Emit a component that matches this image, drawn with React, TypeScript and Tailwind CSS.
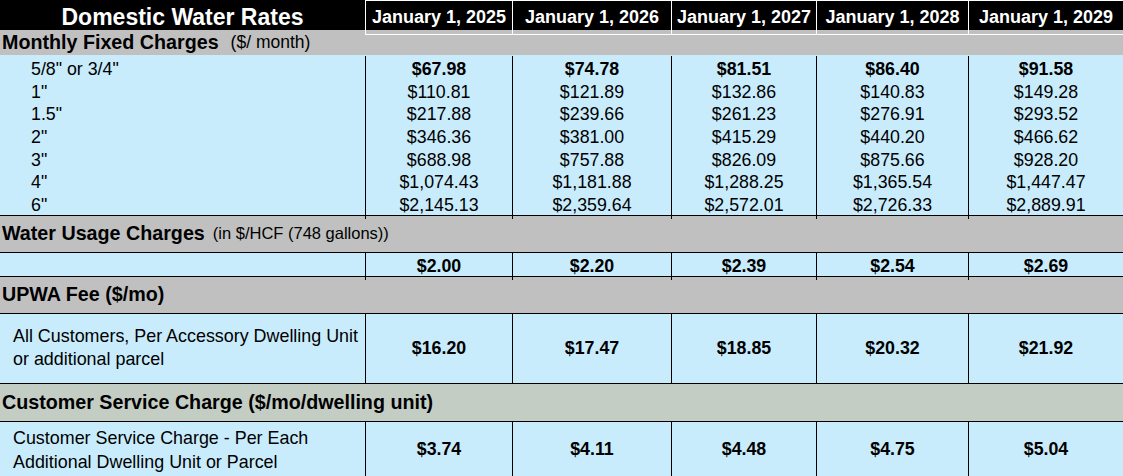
import React from 'react';

const cols = 'grid grid-cols-[366px_147px_159px_145px_152px_154px]';
const years = ['January 1, 2025', 'January 1, 2026', 'January 1, 2027', 'January 1, 2028', 'January 1, 2029'];

const fixedCharges: { size: string; values: string[]; bold?: boolean }[] = [
  { size: '5/8" or 3/4"', values: ['$67.98', '$74.78', '$81.51', '$86.40', '$91.58'], bold: true },
  { size: '1"', values: ['$110.81', '$121.89', '$132.86', '$140.83', '$149.28'] },
  { size: '1.5"', values: ['$217.88', '$239.66', '$261.23', '$276.91', '$293.52'] },
  { size: '2"', values: ['$346.36', '$381.00', '$415.29', '$440.20', '$466.62'] },
  { size: '3"', values: ['$688.98', '$757.88', '$826.09', '$875.66', '$928.20'] },
  { size: '4"', values: ['$1,074.43', '$1,181.88', '$1,288.25', '$1,365.54', '$1,447.47'] },
  { size: '6"', values: ['$2,145.13', '$2,359.64', '$2,572.01', '$2,726.33', '$2,889.91'] },
];

const usage = ['$2.00', '$2.20', '$2.39', '$2.54', '$2.69'];
const upwa = ['$16.20', '$17.47', '$18.85', '$20.32', '$21.92'];
const service = ['$3.74', '$4.11', '$4.48', '$4.75', '$5.04'];

const ValueCells: React.FC<{ values: string[]; bold?: boolean }> = ({ values, bold }) => (
  <>
    {values.map((v, i) => (
      <div
        key={i}
        className={`flex items-center justify-center ${i < values.length - 1 ? 'border-r border-black' : ''} ${bold ? 'font-bold' : ''}`}
      >
        {v}
      </div>
    ))}
  </>
);

const App: React.FC = () => {
  return (
    <div className="h-[476px] w-[1123px] overflow-hidden bg-white font-['Liberation_Sans',Arial,sans-serif] text-[17.8px] text-black">
      {/* header */}
      <div className={`${cols} h-[30px] bg-black text-white font-bold`}>
        <div className="flex items-center justify-center border-r border-white text-[23px]">Domestic Water Rates</div>
        {years.map((y, i) => (
          <div
            key={y}
            className={`flex items-center justify-center border-y border-white text-[18px] ${i < years.length - 1 ? 'border-r' : ''}`}
          >
            {y}
          </div>
        ))}
      </div>

      {/* monthly fixed */}
      <div className="flex h-[25px] items-center bg-[#c0c0c0] pl-[2px]">
        <span className="text-[19.7px] font-bold">Monthly Fixed Charges</span>
        <span className="ml-[12px] text-[17.5px]">($/ month)</span>
      </div>
      <div className="border-b border-black bg-[#c9ecfc] pt-[1px]">
        {fixedCharges.map((row) => (
          <div key={row.size} className={`${cols} h-[22.7px]`}>
            <div className="flex items-center border-r border-black pl-[31px]">{row.size}</div>
            <ValueCells values={row.values} bold={row.bold} />
          </div>
        ))}
      </div>

      {/* water usage */}
      <div className="flex h-[37px] items-center border-b border-black bg-[#c0c0c0] pl-[2px]">
        <span className="text-[19.7px] font-bold">Water Usage Charges</span>
        <span className="ml-[8px] text-[16.5px]">(in $/HCF (748 gallons))</span>
      </div>
      <div className={`${cols} h-[24px] border-b border-black bg-[#c9ecfc]`}>
        <div className="border-r border-black" />
        <ValueCells values={usage} bold />
      </div>

      {/* UPWA */}
      <div className="flex h-[37px] items-center border-b border-black bg-[#c0c0c0] pl-[2px]">
        <span className="text-[19.7px] font-bold">UPWA Fee ($/mo)</span>
      </div>
      <div className={`${cols} h-[70px] border-b border-black bg-[#c9ecfc]`}>
        <div className="flex flex-col justify-center border-r border-black pl-[13px] text-[17.9px] leading-[23px]">
          <span>All Customers, Per Accessory Dwelling Unit</span>
          <span>or additional parcel</span>
        </div>
        <ValueCells values={upwa} bold />
      </div>

      {/* customer service */}
      <div className="flex h-[38px] items-center border-b border-black bg-[#c4cdc4] pl-[2px]">
        <span className="text-[19.7px] font-bold">Customer Service Charge ($/mo/dwelling unit)</span>
      </div>
      <div className={`${cols} h-[56px] bg-[#c9ecfc]`}>
        <div className="flex flex-col justify-center border-r border-black pl-[13px] text-[17.9px] leading-[24px]">
          <span>Customer Service Charge - Per Each</span>
          <span>Additional Dwelling Unit or Parcel</span>
        </div>
        <ValueCells values={service} bold />
      </div>
    </div>
  );
};

export default App;
